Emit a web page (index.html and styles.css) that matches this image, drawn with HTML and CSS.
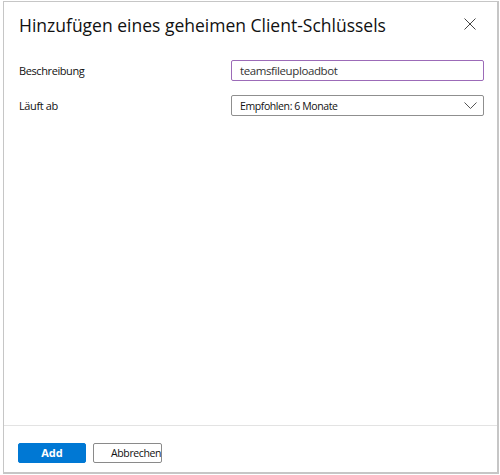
FILE: index.html
```html
<!DOCTYPE html>
<html lang="de">
<head>
<meta charset="utf-8">
<link rel="stylesheet" href="styles.css">
</head>
<body>
<div class="dialog">
  <div class="header">
    <h1 class="title">Hinzufügen eines geheimen Client-Schlüssels</h1>
    <button class="close" aria-label="Schließen">
      <svg width="12" height="12" viewBox="0 0 12 12"><path d="M0.5 0.5 L11.5 11.5 M11.5 0.5 L0.5 11.5" stroke="#444" stroke-width="1" fill="none"/></svg>
    </button>
  </div>
  <div class="body">
    <div class="row">
      <label class="label">Beschreibung</label>
      <div class="field input">teamsfileuploadbot</div>
    </div>
    <div class="row">
      <label class="label">Läuft ab</label>
      <div class="field select">
        <span>Empfohlen: 6 Monate</span>
        <svg class="chev" width="13" height="7" viewBox="0 0 13 7"><path d="M0.5 0.5 L6.5 6.5 L12.5 0.5" stroke="#555" stroke-width="1" fill="none"/></svg>
      </div>
    </div>
  </div>
  <div class="footer">
    <button class="btn primary">Add</button>
    <button class="btn secondary">Abbrechen</button>
  </div>
</div>
</body>
</html>
```
FILE: styles.css
```css
html, body {
  margin: 0;
  padding: 0;
  background: #ffffff;
}
body {
  font-family: "Open Sans", "Noto Sans", "Liberation Sans", sans-serif;
  color: #111;
  padding: 1px 0 0 3px;
}
.dialog {
  box-sizing: border-box;
  width: 496px;
  height: 473px;
  border: 1px solid #c6c6c6;
  border-right-width: 2px;
  border-bottom-width: 2px;
  display: flex;
  flex-direction: column;
  background: #fff;
}
.header {
  display: flex;
  justify-content: space-between;
  align-items: flex-start;
  padding: 11px 21px 0 15px;
  height: 46px;
  box-sizing: border-box;
}
.title {
  margin: 0;
  font-family: "Open Sans", sans-serif;
  font-weight: 400;
  font-size: 17.5px;
  line-height: 24px;
  color: #111;
}
.close {
  border: 0;
  background: none;
  padding: 0;
  margin-top: 5px;
  width: 12px;
  height: 12px;
  display: block;
}
.close svg { display: block; }
.body {
  flex: 1;
  padding: 12px 13px 0 15px;
  display: flex;
  flex-direction: column;
  gap: 14px;
}
.row {
  display: flex;
  align-items: center;
  height: 21px;
}
.label {
  width: 212px;
  font-size: 11px;
  letter-spacing: -0.4px;
  color: #111;
}
.field {
  box-sizing: border-box;
  width: 253px;
  height: 21px;
  display: flex;
  align-items: center;
  padding: 0 8px;
}
.input {
  border: 1px solid #9c6bb8;
  border-radius: 2px;
  color: #333;
  font-size: 11.5px;
  letter-spacing: -0.4px;
}
.select {
  border: 1px solid #8f8f8f;
  border-radius: 2px;
  justify-content: space-between;
  color: #111;
  font-size: 10.5px;
  letter-spacing: -0.4px;
  padding-right: 6px;
}
.chev { display: block; }
.footer {
  border-top: 1px solid #e3e3e3;
  height: 47px;
  box-sizing: border-box;
  display: flex;
  align-items: flex-start;
  padding: 17px 0 0 14px;
  gap: 7px;
}
.btn {
  box-sizing: border-box;
  height: 20px;
  font-family: "Open Sans", sans-serif;
  font-size: 11px;
  border-radius: 2px;
  padding: 0;
  line-height: 18px;
}
.primary {
  width: 68px;
  background: #0078d4;
  border: 1px solid #0078d4;
  color: #fff;
  font-weight: 700;
}
.secondary {
  width: 69px;
  background: #fff;
  border: 1px solid #8a8a8a;
  color: #111;
  text-align: right;
  padding-right: 0;
  font-size: 10.5px;
  letter-spacing: -0.4px;
  white-space: nowrap;
  overflow: hidden;
}
```
